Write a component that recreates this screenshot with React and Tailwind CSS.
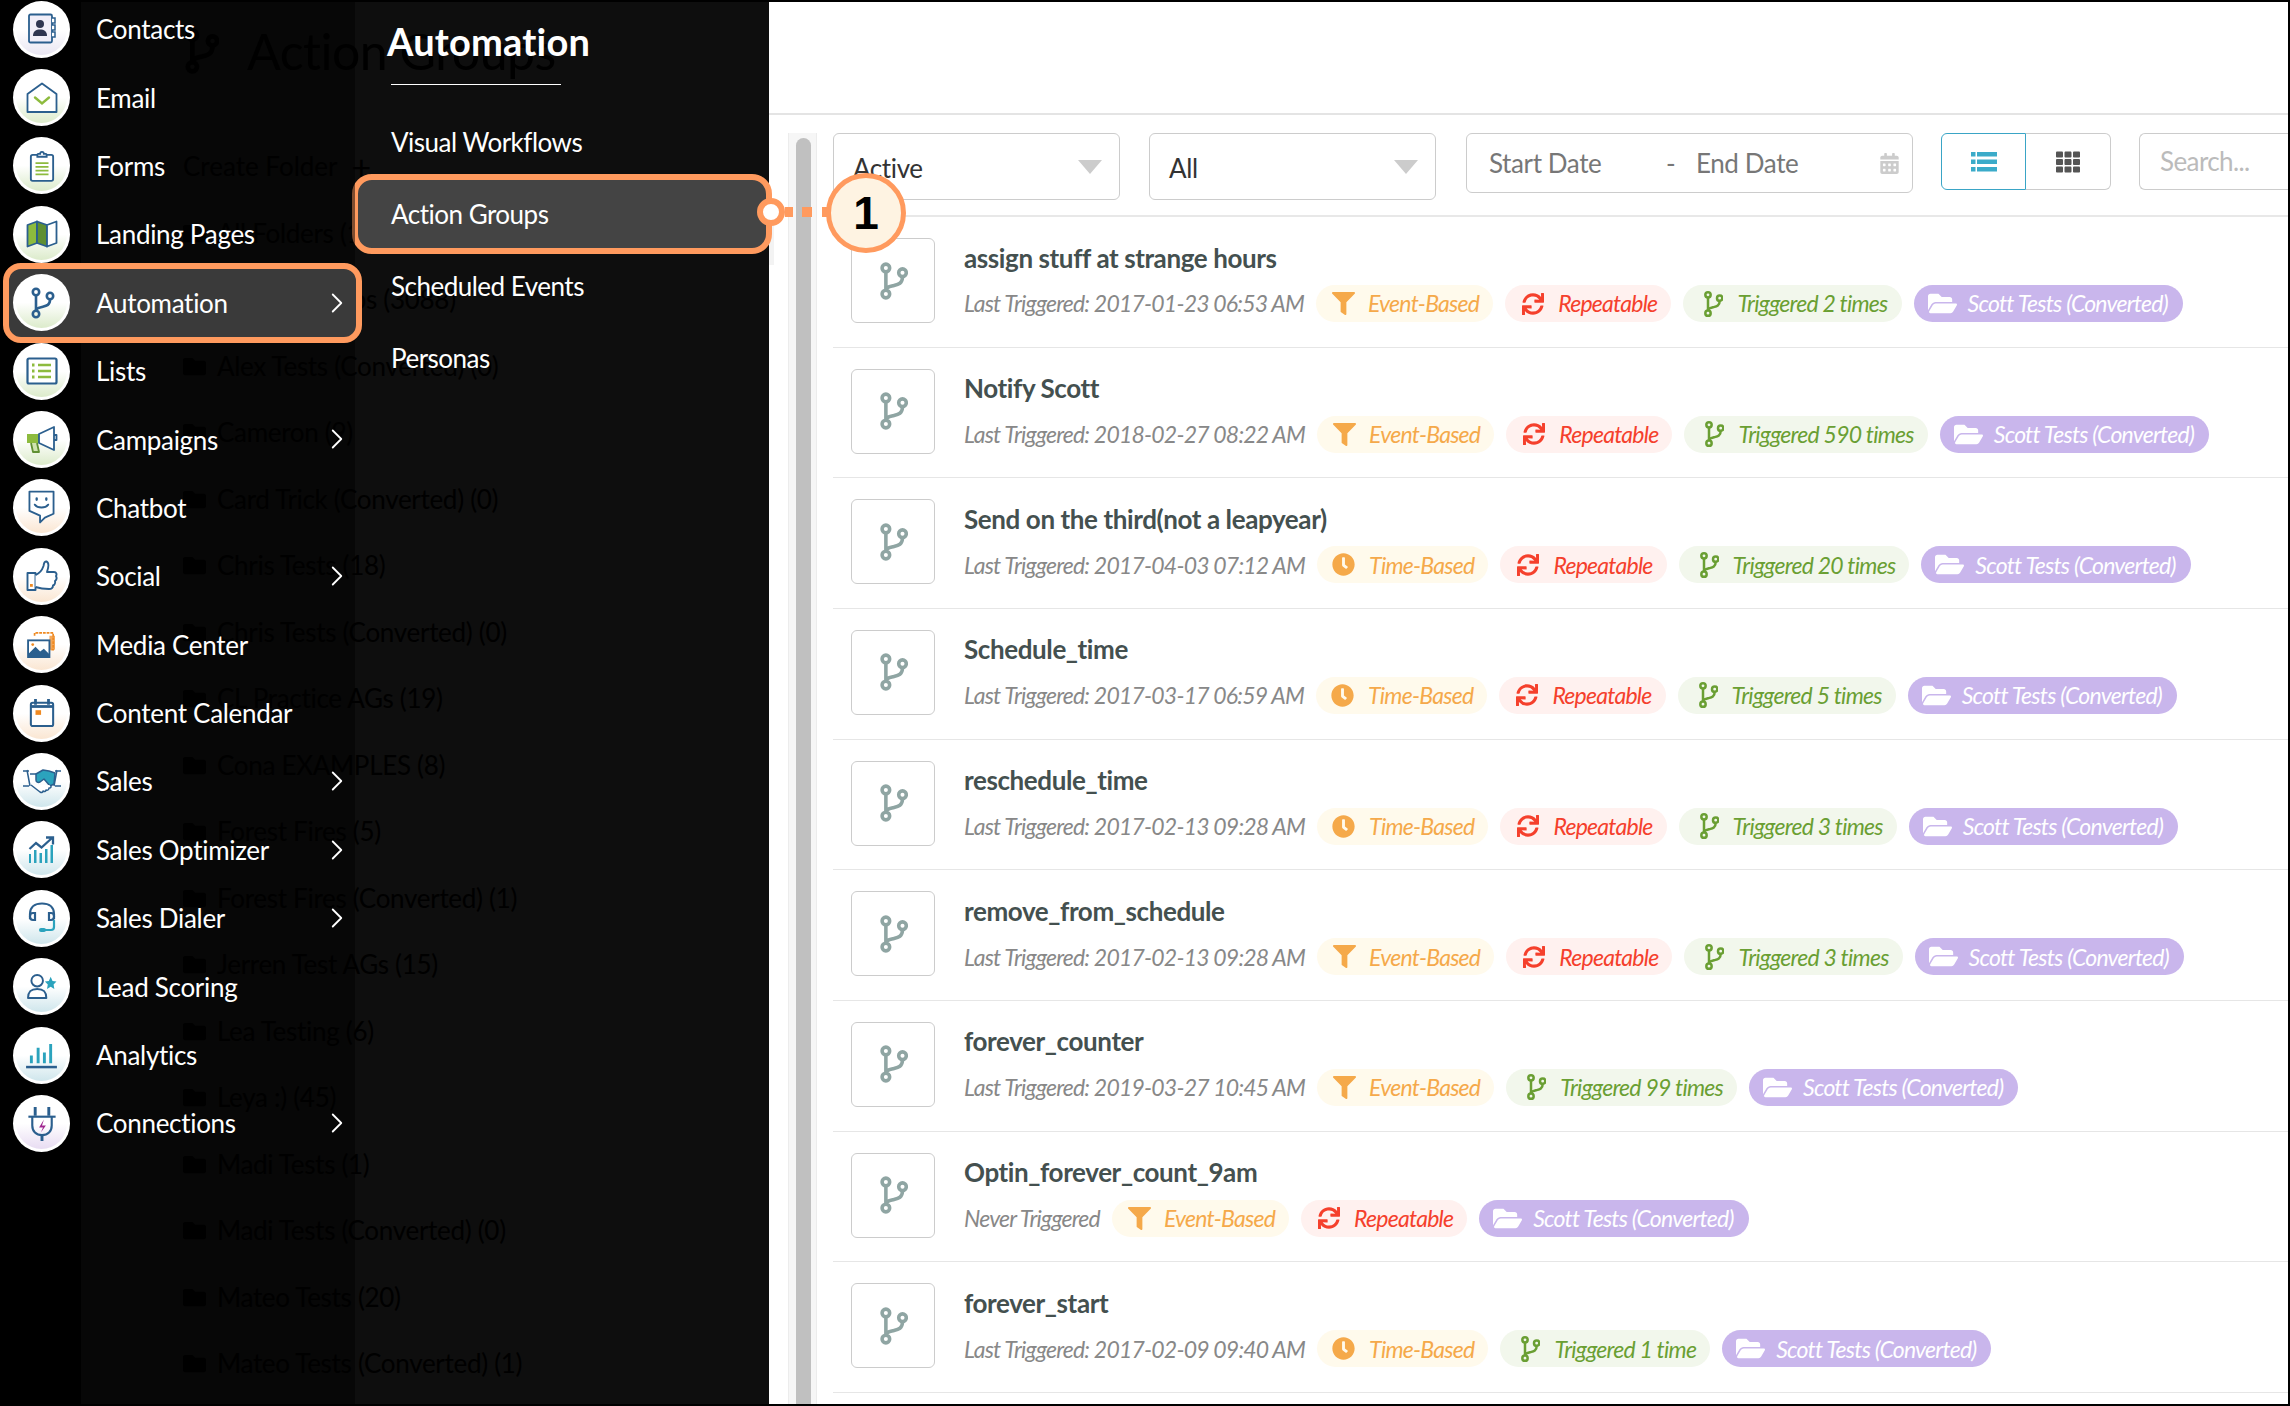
import React from "react";
import { ChevronRight } from "lucide-react";
import { FaFilter, FaClock, FaSync, FaFolderOpen, FaFolder, FaTh, FaCalendarAlt } from "react-icons/fa";

const BLUE = "#2b5f8e";
const GREEN = "#8dbb3e";
const ORANGE = "#ef8a22";
const TEAL = "#2ba3bd";

const Branch = ({ color = BLUE, sw = 2.6, className = "" }) => (
  <svg viewBox="0 0 24 32" className={className} fill="none" stroke={color} strokeWidth={sw}>
    <circle cx="6" cy="5" r="3.2" />
    <circle cx="20" cy="9" r="3.2" />
    <circle cx="6" cy="27" r="3.2" />
    <path d="M6 8.500v15M20 12.500c0 6-4 6.500-8 7.500c-3 .7-6 1-6 4" />
  </svg>
);

const icons = {
  contacts: (
    <svg viewBox="0 0 32 32" className="w-[32px] h-[32px]" fill="none" stroke={BLUE} strokeWidth="1.800">
      <rect x="3" y="1.500" width="23" height="28" rx="1.500" fill="#f1eef8" />
      <path d="M26 5h3v5h-3M26 12h3v5h-3M26 19h3v5h-3" strokeWidth="1.500" fill="#fff" />
      <circle cx="14" cy="11" r="4" fill="#2f3550" stroke="none" />
      <path d="M7 23c0-5 3-6.500 7-6.500s7 1.500 7 6.500z" fill="#2f3550" stroke="none" />
    </svg>
  ),
  email: (
    <svg viewBox="0 0 32 32" className="w-[32px] h-[32px]" fill="none" stroke={BLUE} strokeWidth="1.800">
      <path d="M1.500 12L16 1.500L30.500 12v18h-29z" fill="#fff" strokeLinejoin="round" />
      <path d="M9 15.500l7 6l7-6" stroke={GREEN} strokeWidth="2.400" strokeLinecap="round" />
    </svg>
  ),
  forms: (
    <svg viewBox="0 0 28 34" className="w-[26px] h-[32px]" fill="none" stroke={BLUE} strokeWidth="2">
      <rect x="2" y="5" width="24" height="28" rx="2" fill="#fff" />
      <path d="M9 5c0-1.500 2-1 3-1c0-3 4-3 4 0c1 0 3-.5 3 1v2H9z" fill="#fff" />
      <path d="M7 14h14M7 18h14M7 22h14M7 26h14" stroke={GREEN} strokeWidth="1.900" />
    </svg>
  ),
  landing: (
    <svg viewBox="0 0 32 28" className="w-[32px] h-[28px]" fill="none" stroke={BLUE} strokeWidth="1.800" strokeLinejoin="round">
      <path d="M1.500 5L11 1.500v21.500L1.500 26.500z" fill={GREEN} />
      <path d="M11 1.500L21 5v21.500L11 23z" fill="#5f8f32" />
      <path d="M21 5l9.500-3.500V23L21 26.500z" fill="#fff" />
    </svg>
  ),
  automation: <Branch color={BLUE} className="w-[26px] h-[32px]" />,
  lists: (
    <svg viewBox="0 0 32 28" className="w-[32px] h-[28px]" fill="none" stroke={BLUE} strokeWidth="2.200">
      <rect x="1.500" y="1.500" width="29" height="25" rx="1.500" fill="#fff" />
      <path d="M12 8h13M12 14h13M12 20h13" stroke={GREEN} strokeWidth="2.400" />
      <path d="M6 8h2.500M6 14h2.500M6 20h2.500" stroke={GREEN} strokeWidth="3" />
    </svg>
  ),
  campaigns: (
    <svg viewBox="0 0 32 28" className="w-[32px] h-[28px]" fill="none" stroke={BLUE} strokeWidth="1.800" strokeLinejoin="round">
      <path d="M1 8h12v9H1z" fill={GREEN} stroke="none" />
      <path d="M13 8l15-7v23l-15-7z" fill="#fff" />
      <path d="M28 9h2.500v5H28" />
      <path d="M5 17l2 9h6l-2-9" fill="#cfe3b0" stroke="#5f8f32" />
    </svg>
  ),
  chatbot: (
    <svg viewBox="0 0 28 36" className="w-[27px] h-[35px]" fill="none" stroke={BLUE} strokeWidth="1.900" strokeLinejoin="round">
      <path d="M1.500 1.500h25v23l-9 4l-5 5v-7l-11-5z" fill="#fff" />
      <path d="M7 15c3 4 11 4 14 0" strokeLinecap="round" />
      <path d="M9 8.500v1.500M19 8.500v1.500" strokeWidth="2.400" strokeLinecap="round" />
    </svg>
  ),
  social: (
    <svg viewBox="0 0 32 32" className="w-[32px] h-[32px]" fill="none" stroke={BLUE} strokeWidth="1.900" strokeLinejoin="round">
      <rect x="1.500" y="13" width="8" height="17" fill="#fff" />
      <rect x="4" y="24" width="2.800" height="2.800" fill={ORANGE} stroke="none" />
      <path d="M9.500 15c5-2 7-6 8-9c.5-3 1-5 3-4.500c2.500 1 2 6 .5 10.500h7c2.500 0 3 2.500 2 4c1 2 .5 4-1 5c.5 2-.5 4-2 4.500c0 2-1.500 3.500-4 3.500c-5 0-9-.5-13.500-2" fill="#fff" />
    </svg>
  ),
  media: (
    <svg viewBox="0 0 32 28" className="w-[32px] h-[26px]">
      <path d="M8 4V1h20v18h-4" fill="none" stroke={ORANGE} strokeWidth="1.800" strokeDasharray="3 1" />
      <path d="M24 4h6v15h-6z" fill={ORANGE} opacity=".75" />
      <rect x="1" y="9" width="23" height="18" fill="#fff" stroke={BLUE} strokeWidth="2" />
      <path d="M2 27v-4l7-7l5 5l4-3l6 6v3z" fill={BLUE} />
      <circle cx="6" cy="13.500" r="1.500" fill={ORANGE} />
    </svg>
  ),
  calendar: (
    <svg viewBox="0 0 28 32" className="w-[26px] h-[30px]" fill="none" stroke={BLUE} strokeWidth="2.200">
      <rect x="2" y="5" width="24" height="25" rx="2" fill="#fff" />
      <path d="M2 9h24" strokeWidth="3" />
      <path d="M7 1v6M21 1v6" strokeWidth="3" />
      <rect x="7" y="13" width="6" height="5" fill={ORANGE} stroke="none" />
    </svg>
  ),
  sales: (
    <svg viewBox="0 0 40 26" className="w-[40px] h-[26px]" fill="none" stroke={BLUE} strokeWidth="1.500" strokeLinejoin="round">
      <path d="M5 2l3 16M35 2l-3 16M1 3h6M33 3h6M1 18h6M33 18h6" />
      <path d="M14 6l7-4l6 1l6 2l-1 11l-4 2l-6-7l-4 3c-2 1-4 0-4-2z" fill={TEAL} />
      <path d="M8 6h6M9 17l9 7c2 1 3 0 3-1c2 1 3 0 3-1c2 .5 3-.5 3-2c2 0 3-1 1-3" fill="#fff" />
    </svg>
  ),
  optimizer: (
    <svg viewBox="0 0 28 28" className="w-[28px] h-[28px]" fill="none">
      <path d="M1.500 13L8 7l5.500 4.500L24 2M18 1.500h7v7" stroke={BLUE} strokeWidth="2.300" />
      <path d="M1 18h2v9H1zM6 14h2.500v13H6zM11.500 17H14v10h-2.500zM17 13h2.500v14H17zM22.500 9H25v18h-2.500z" fill={TEAL} />
    </svg>
  ),
  dialer: (
    <svg viewBox="0 0 28 32" className="w-[28px] h-[32px]" fill="none" stroke={BLUE} strokeWidth="2.200">
      <path d="M2 17V12C2 5 7 1.500 14 1.500S26 5 26 12v5" />
      <path d="M7 11H5c-2 0-3 1.500-3 3.500S3 18 5 18h2zM21 11h2c2 0 3 1.500 3 3.500S25 18 23 18h-2z" fill="#fff" />
      <path d="M26 18v7c0 2-1 3-3 3h-7" stroke={TEAL} />
      <rect x="11" y="26" width="7" height="4" rx="2" fill={TEAL} stroke="none" />
    </svg>
  ),
  lead: (
    <svg viewBox="0 0 32 28" className="w-[32px] h-[27px]" fill="none" stroke={BLUE} strokeWidth="2">
      <circle cx="11" cy="8" r="6" fill="#fff" />
      <path d="M1.500 26c0-7 3-9.500 9.500-9.500s9.500 2.500 9.500 9.500z" fill="#fff" strokeLinejoin="round" />
      <path d="M25 4l1.900 4.200l4.100.5l-3 3.100l.8 4.700l-3.800-2.300l-3.800 2.300l.8-4.700l-3-3.100l4.100-.5z" fill={TEAL} stroke="none" />
    </svg>
  ),
  analytics: (
    <svg viewBox="0 0 32 28" className="w-[31px] h-[27px]">
      <path d="M4 14h3v8H4zM11 6h3v16h-3zM17.500 11h3v11h-3zM24 2h3v20h-3z" fill={TEAL} />
      <path d="M0 26h32" stroke={BLUE} strokeWidth="2.600" />
    </svg>
  ),
  connections: (
    <svg viewBox="0 0 28 36" className="w-[28px] h-[35px]" fill="none" stroke={BLUE} strokeWidth="2.200">
      <path d="M7 1v9M21 1v9" strokeWidth="3" />
      <path d="M0 11h28" />
      <path d="M4 11v9c0 6 4 10 10 10s10-4 10-10v-9" />
      <path d="M14 30v6" strokeWidth="3" />
      <path d="M16 14l-5 8h4l-2 5l5-7h-4z" fill="#a0268f" stroke="none" />
    </svg>
  ),
};

const navItems = [
  { label: "Contacts", icon: "contacts", tint: "to-[#e9e6f2]" },
  { label: "Email", icon: "email", tint: "to-[#dcebcb]" },
  { label: "Forms", icon: "forms", tint: "to-[#dcebcb]" },
  { label: "Landing Pages", icon: "landing", tint: "to-[#dcebcb]" },
  { label: "Automation", icon: "automation", tint: "to-[#dcebcb]", arrow: true, active: true },
  { label: "Lists", icon: "lists", tint: "to-[#dcebcb]" },
  { label: "Campaigns", icon: "campaigns", tint: "to-[#dcebcb]", arrow: true },
  { label: "Chatbot", icon: "chatbot", tint: "to-[#fae6d2]" },
  { label: "Social", icon: "social", tint: "to-[#fae6d2]", arrow: true },
  { label: "Media Center", icon: "media", tint: "to-[#fae6d2]" },
  { label: "Content Calendar", icon: "calendar", tint: "to-[#fae6d2]" },
  { label: "Sales", icon: "sales", tint: "to-[#cfe6ec]", arrow: true },
  { label: "Sales Optimizer", icon: "optimizer", tint: "to-[#cfe6ec]", arrow: true },
  { label: "Sales Dialer", icon: "dialer", tint: "to-[#cfe6ec]", arrow: true },
  { label: "Lead Scoring", icon: "lead", tint: "to-[#cfe6ec]" },
  { label: "Analytics", icon: "analytics", tint: "to-[#cfe6ec]" },
  { label: "Connections", icon: "connections", tint: "to-[#e8dcf2]", arrow: true },
];

const folders = [
  "All Folders (1282)",
  "Action Groups (3088)",
  "Alex Tests (Converted) (0)",
  "Cameron (9)",
  "Card Trick (Converted) (0)",
  "Chris Tests (18)",
  "Chris Tests (Converted) (0)",
  "CL Practice AGs (19)",
  "Cona EXAMPLES (8)",
  "Forest Fires (5)",
  "Forest Fires (Converted) (1)",
  "Jerren Test AGs (15)",
  "Lea Testing (6)",
  "Leya :) (45)",
  "Madi Tests (1)",
  "Madi Tests (Converted) (0)",
  "Mateo Tests (20)",
  "Mateo Tests (Converted) (1)",
];

const rows = [
  { name: "assign stuff at strange hours", last: "Last Triggered: 2017-01-23 06:53 AM", kind: "event", repeat: true, times: "Triggered 2 times" },
  { name: "Notify Scott", last: "Last Triggered: 2018-02-27 08:22 AM", kind: "event", repeat: true, times: "Triggered 590 times" },
  { name: "Send on the third(not a leapyear)", last: "Last Triggered: 2017-04-03 07:12 AM", kind: "time", repeat: true, times: "Triggered 20 times" },
  { name: "Schedule_time", last: "Last Triggered: 2017-03-17 06:59 AM", kind: "time", repeat: true, times: "Triggered 5 times" },
  { name: "reschedule_time", last: "Last Triggered: 2017-02-13 09:28 AM", kind: "time", repeat: true, times: "Triggered 3 times" },
  { name: "remove_from_schedule", last: "Last Triggered: 2017-02-13 09:28 AM", kind: "event", repeat: true, times: "Triggered 3 times" },
  { name: "forever_counter", last: "Last Triggered: 2019-03-27 10:45 AM", kind: "event", times: "Triggered 99 times" },
  { name: "Optin_forever_count_9am", last: "Never Triggered", kind: "event", repeat: true },
  { name: "forever_start", last: "Last Triggered: 2017-02-09 09:40 AM", kind: "time", times: "Triggered 1 time" },
];

const Chip = ({ className, children }) => (
  <span className={`flex items-center h-[37px] rounded-full italic text-[23px] tracking-[-0.75px] whitespace-nowrap ${className}`}>
    {children}
  </span>
);

const ActionRow = ({ row }) => (
  <div className="flex h-[130.67px] shrink-0 border-b border-[#e6e6e6] pl-[18px] pt-[21px]">
    <div className="flex items-center justify-center w-[84px] h-[85px] rounded-md border border-[#cccccc]">
      <Branch color="#8fa5a3" sw={3} className="w-[30px] h-[38px]" />
    </div>
    <div className="ml-[29px]">
      <div className="h-[40px] flex items-center text-[26px] font-bold text-[#44504f] tracking-[-0.4px]">{row.name}</div>
      <div className="flex items-center gap-[12px] mt-[7px] h-[37px]">
        <span className="italic text-[23px] text-[#888888] tracking-[-0.8px] whitespace-nowrap">{row.last}</span>
        {row.kind === "event" ? (
          <Chip className="bg-[#fffaec] text-[#f5a94a] pl-[16px] pr-[14px] gap-[13px]">
            <FaFilter size={23} /> Event-Based
          </Chip>
        ) : (
          <Chip className="bg-[#fffaec] text-[#f5a94a] pl-[15px] pr-[14px] gap-[14px]">
            <FaClock size={23} /> Time-Based
          </Chip>
        )}
        {row.repeat && (
          <Chip className="bg-[#fff1ef] text-[#f5402c] pl-[17px] pr-[14px] gap-[14px]">
            <FaSync size={22} /> Repeatable
          </Chip>
        )}
        {row.times && (
          <Chip className="bg-[#f2f7ec] text-[#6a9f33] pl-[20px] pr-[14px] gap-[14px]">
            <Branch color="#6a9f33" sw={3} className="w-[20px] h-[28px]" /> {row.times}
          </Chip>
        )}
        <Chip className="bg-[#c9b6ec] text-white pl-[14px] pr-[15px] gap-[11px]">
          <FaFolderOpen size={29} /> Scott Tests (Converted)
        </Chip>
      </div>
    </div>
  </div>
);

const NavRow = ({ item }) => (
  <div className="relative flex items-center h-[68.4px] shrink-0 pl-[13px]">
    {item.active && (
      <div className="absolute left-[3px] top-[-6px] w-[359px] h-[80px] rounded-[18px] border-[6px] border-[#ff9a5e] bg-[#3a3a3a]" />
    )}
    <div className="relative w-[57px] h-[57px] rounded-full bg-white flex items-center justify-center shrink-0">
      <div className={`w-[51px] h-[51px] rounded-full bg-gradient-to-b from-white from-50% ${item.tint} flex items-center justify-center`}>
        {icons[item.icon]}
      </div>
    </div>
    <span className="relative ml-[26px] pt-[1px] text-[26px] text-white tracking-[-0.3px]">{item.label}</span>
    {item.arrow && <ChevronRight className="absolute left-[320px] top-[17px] text-white" size={34} strokeWidth={1.300} />}
  </div>
);

export default function App() {
  return (
    <div className="relative flex w-[2290px] h-[1406px] overflow-hidden bg-white font-['Lato','Liberation_Sans',sans-serif]">
      {/* page underneath the menu overlay */}
      <div className="w-[81px] bg-black shrink-0" />
      <div className="w-[688px] shrink-0 bg-[#0e0e0e] border-y-2 border-black pl-[102px] text-black overflow-hidden">
        <div className="flex items-center gap-[28px] h-[98px] whitespace-nowrap">
          <Branch color="#000" sw={3.2} className="w-[36px] h-[46px]" />
          <span className="text-[50px] tracking-[-0.5px]">Action Groups</span>
        </div>
        <div className="flex items-center gap-[14px] h-[66px] text-[26px] mt-[33px]">
          Create Folder <span className="text-[34px]">+</span>
        </div>
        <div className="mt-[1px]">
          {folders.map((f) => (
            <div key={f} className="flex items-center gap-[11px] h-[66.5px] text-[26px] whitespace-nowrap tracking-[-0.3px]">
              <FaFolder size={23} /> {f}
            </div>
          ))}
        </div>
      </div>

      {/* main list */}
      <div className="flex-1 min-w-0 flex flex-col border-y-2 border-r-2 border-black">
        <div className="h-[113px] shrink-0 border-b-2 border-[#e4e4e4]" />
        <div className="flex flex-1 min-h-0 pt-[18px]">
          <div className="ml-[19px] w-[29px] shrink-0 bg-[#f6f6f6] border-x border-[#ececec] pt-[5px] pl-[7px]">
            <div className="w-[15px] h-full rounded-t-full bg-[#c0c0c0]" />
          </div>
          <div className="ml-[16px] flex-1 min-w-0 flex flex-col">
            <div className="flex items-start h-[84px] shrink-0 border-b-2 border-[#e8e8e8]">
              <div className="flex items-center justify-between w-[287px] h-[67px] rounded-md border border-[#cccccc] pl-[19px] pr-[17px] pt-[4px] text-[26px] text-[#333333] tracking-[-0.4px]">
                Active
                <span className="w-0 h-0 border-x-[12px] border-x-transparent border-t-[14px] border-t-[#cccccc] mb-[4px]" />
              </div>
              <div className="ml-[29px] flex items-center justify-between w-[287px] h-[67px] rounded-md border border-[#cccccc] pl-[19px] pr-[17px] pt-[4px] text-[26px] text-[#333333] tracking-[-0.4px]">
                All
                <span className="w-0 h-0 border-x-[12px] border-x-transparent border-t-[14px] border-t-[#cccccc] mb-[4px]" />
              </div>
              <div className="ml-[30px] flex items-center w-[447px] h-[60px] rounded-md border border-[#cccccc] pl-[22px] pr-[12px] text-[26px] text-[#777777] tracking-[-0.4px]">
                <span className="w-[177px]">Start Date</span>
                <span className="w-[30px]">-</span>
                <span>End Date</span>
                <FaCalendarAlt className="ml-auto text-[#cccccc]" size={21} />
              </div>
              <div className="ml-[28px] flex w-[170px] h-[57px]">
                <div className="flex items-center justify-center w-[85px] rounded-l-md border border-[#3aa5c6]">
                  <svg viewBox="0 0 26 20" className="w-[26px] h-[20px]" fill="#3babc9">
                    <path d="M0 0h4.500v4.500H0zM6 0h20v4.500H6zM0 7.500h4.500V12H0zM6 7.500h20V12H6zM0 15h4.500v4.500H0zM6 15h20v4.500H6z" />
                  </svg>
                </div>
                <div className="flex items-center justify-center w-[85px] rounded-r-md border border-l-0 border-[#cccccc]">
                  <FaTh className="text-[#555555]" size={24} />
                </div>
              </div>
              <div className="ml-[28px] flex-1 h-[57px] flex items-center rounded-l-md border border-r-0 border-[#cccccc] pl-[20px] text-[26px] text-[#bbbbbb] tracking-[-0.6px]">
                Search...
              </div>
            </div>
            {rows.map((r) => (
              <ActionRow key={r.name} row={r} />
            ))}
          </div>
        </div>
      </div>

      {/* strip of the hovered page row showing past the flyout */}
      <div className="absolute left-[769px] top-[200px] w-[5px] h-[65px] bg-[#f3f3f3]" />

      {/* submenu flyout */}
      <div className="absolute left-[355px] top-[2px] w-[414px] h-[1402px] text-white text-[26px] tracking-[-0.5px]">
        <div className="ml-[36px] w-[170px] h-[83px] pt-[14px] border-b border-white text-[38px] font-bold leading-[50px] whitespace-nowrap">
          <span className="-ml-[4px] tracking-[0.2px]">Automation</span>
        </div>
        <div className="pt-[21px]">
          <div className="flex items-center h-[72px] pl-[36px]">Visual Workflows</div>
          <div className="relative flex items-center h-[72px] pl-[36px]">
            <div className="absolute left-[-3px] top-[-4px] w-[420px] h-[80px] rounded-[20px] border-[6px] border-[#ff9a5e] bg-[#444444]" />
            <span className="relative">Action Groups</span>
          </div>
          <div className="flex items-center h-[72px] pl-[36px]">Scheduled Events</div>
          <div className="flex items-center h-[72px] pl-[36px]">Personas</div>
        </div>
      </div>

      {/* left nav overlay */}
      <div className="absolute left-0 top-0 w-[355px] h-full bg-black/50">
        <div className="mt-[-5px] flex flex-col">
          {navItems.map((item) => (
            <NavRow key={item.label} item={item} />
          ))}
        </div>
      </div>

      {/* numbered callout */}
      <div className="absolute left-[757px] top-[198px] w-[28px] h-[28px] rounded-full bg-white border-[6px] border-[#ff9a5e]" />
      <div className="absolute left-[785px] top-[207px] w-[8px] h-[10px] bg-[#ff9a5e]" />
      <div className="absolute left-[802px] top-[207px] w-[10px] h-[10px] bg-[#ff9a5e]" />
      <div className="absolute left-[822px] top-[207px] w-[8px] h-[10px] bg-[#ff9a5e]" />
      <div className="absolute left-[826px] top-[173px] w-[80px] h-[80px] rounded-full bg-[#fef3e2] border-[5px] border-[#ff9a5e] flex items-center justify-center font-['Liberation_Sans',sans-serif] text-[46px] font-bold text-black">
        1
      </div>
    </div>
  );
}
